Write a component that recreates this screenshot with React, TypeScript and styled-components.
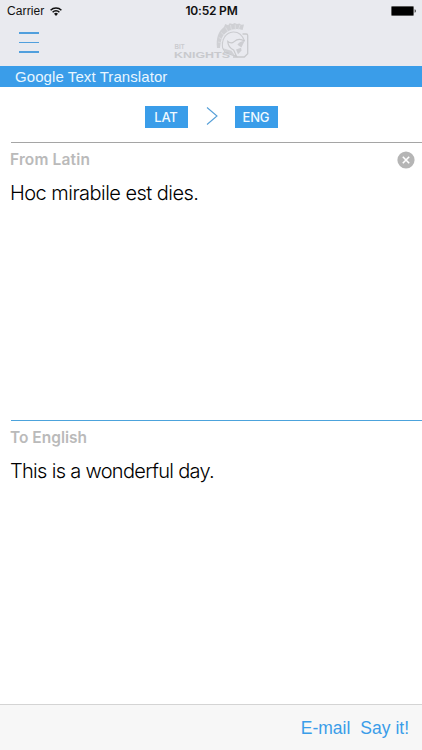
import React from 'react'
import styled, { createGlobalStyle } from 'styled-components';

const BLUE = '#3a9de9';

const GlobalStyle = createGlobalStyle`
  * {
    box-sizing: border-box;
  }
  body {
    margin: 0;
    background-color: #fff;
    font-family: "Liberation Sans", Arial, sans-serif;
  }
`;

const Screen = styled.div`
  display: flex;
  flex-direction: column;
  width: 422px;
  height: 750px;
  overflow: hidden;
  background-color: #fff;
`;

const Header = styled.header`
  height: 66px;
  background-color: #e9eaef;
`;

const StatusBar = styled.div`
  display: grid;
  grid-template-columns: 1fr auto 1fr;
  align-items: center;
  height: 22px;
  padding: 0 6px 0 7px;
  font-size: 12px;
  color: #111;
`;

const Carrier = styled.div`
  display: flex;
  align-items: center;
  gap: 6px;
  letter-spacing: 0.1px;
`;

const Clock = styled.div`
  padding-bottom: 2px;
  font-family: Inter, sans-serif;
  font-weight: 600;
  font-size: 12px;
  letter-spacing: -0.2px;
`;

const BatterySlot = styled.div`
  display: flex;
  justify-content: flex-end;
`;

const NavBar = styled.div`
  display: grid;
  grid-template-columns: 174px 76px;
  height: 44px;
`;

const MenuButton = styled.div`
  display: flex;
  flex-direction: column;
  gap: 8px;
  width: 20px;
  margin: 10px 0 0 19px;
`;

const MenuLine = styled.span`
  height: 1.5px;
  background-color: #509fdd;
`;

const TitleBar = styled.div`
  height: 21px;
  padding-left: 15px;
  background-color: ${BLUE};
  color: #e8f6ff;
  font-size: 15px;
  line-height: 22px;
  letter-spacing: 0.08px;
`;

const LanguageRow = styled.div`
  display: flex;
  justify-content: center;
  align-items: flex-start;
  height: 55px;
  padding-top: 19px;
`;

const LanguageButton = styled.div`
  width: 43px;
  height: 22px;
  background-color: ${BLUE};
  color: #f0f9ff;
  font-family: Inter, sans-serif;
  font-weight: 500;
  font-size: 13px;
  line-height: 23px;
  letter-spacing: -0.2px;
  text-align: center;
`;

const Arrow = styled.svg`
  margin: 0 17px 0 18px;
`;

const Panel = styled.section<{ $height: number; $line: string }>`
  height: ${(p) => p.$height}px;
  margin-left: 11px;
  border-top: 1px solid ${(p) => p.$line};
`;

const PanelHeader = styled.div`
  display: flex;
  justify-content: space-between;
  align-items: center;
  height: 33px;
  padding-right: 7px;
`;

const Label = styled.div<{ $spacing: number }>`
  margin-left: -1px;
  color: #bababa;
  font-family: Inter, sans-serif;
  font-weight: 600;
  font-size: 15.5px;
  letter-spacing: ${(p) => p.$spacing}px;
`;

const Phrase = styled.div<{ $spacing: number }>`
  margin-left: -1px;
  color: #000;
  font-family: Inter, sans-serif;
  font-weight: 300;
  font-size: 20px;
  line-height: 34px;
  letter-spacing: ${(p) => p.$spacing}px;
`;

const Toolbar = styled.footer`
  display: flex;
  justify-content: flex-end;
  gap: 10px;
  height: 46px;
  margin-top: auto;
  padding-right: 13px;
  border-top: 1px solid #d4d4d4;
  background-color: #f7f7f7;
  color: ${BLUE};
  font-size: 17.5px;
  line-height: 46px;
`;

const Action = styled.div`
  white-space: nowrap;
`;

const Wifi = () => (
  <svg width="12" height="9" viewBox="0 0 12 9">
    <g fill="none" stroke="#111" strokeWidth="1.5">
      <path d="M0.6 3.2a7.6 7.6 0 0 1 10.8 0" />
      <path d="M2.6 5.2a4.8 4.8 0 0 1 6.8 0" />
    </g>
    <path d="M6 9L4 6.8a2.9 2.9 0 0 1 4 0z" fill="#111" />
  </svg>
);

const Battery = () => (
  <svg width="25" height="10" viewBox="0 0 25 10">
    <rect x="0" y="0" width="23" height="10" rx="1.2" fill="#777" />
    <rect x="0.8" y="0.8" width="21.4" height="8.4" rx="0.6" fill="#000" />
    <path d="M23.7 3.3c1.4 0.5 1.4 2.9 0 3.4z" fill="#222" />
  </svg>
);

const Logo = () => (
  <svg width="76" height="44" viewBox="0 0 76 44">
    {/* card behind the helmet */}
    <path d="M68.5 12h3.7q1.5 0 1.5 1.5v18.2l-3.4 3.3H59" fill="none" stroke="#c9cacd" strokeWidth="1.3" />
    {/* crest */}
    <path
      d="M43 26C41.8 16 44.6 9 50 5l1.2-3 3 1.3 1.4-2 3 .8 2-1 2.4 1 2.5-.5 1.5 1.2 3-.2-1.4 5.3c-7.8-2.6-16.3.2-20 6.8-1.7 3.2-2 6.5-2.6 11.3z"
      fill="#cfd0d4"
    />
    <path
      d="M44 20l4 1M44.8 15.5l4.5 2.4M47 10.4l4.3 4M51.7 5.5l2.8 5M56.5 3l1 5.4M61.2 2.7l.2 5M66 3l-1.6 4.7"
      stroke="#e0e1e5"
      strokeWidth="0.8"
    />
    {/* dome */}
    <path d="M48.6 26c-1.2-8 2.6-15.4 10.6-16 5.4-.2 9.2 3.2 11.4 9" fill="none" stroke="#cbccd0" strokeWidth="1.1" />
    {/* visor and cheek guard */}
    <path
      d="M70.6 19c-4-2.4-8-1.6-10.4.6-2 1.8-4.6 1.4-6.4-.2 0 3.4 2 6.4 5.8 8.6l3 6.4-11-3.6-3-4.8"
      fill="none"
      stroke="#c8c9cc"
      strokeWidth="1.2"
    />
    <path d="M70.6 19l-3.2 6.4-4-2.6c1.4-2.4 3.8-3.6 7.2-3.8zM62 27.4l5-1.6.6 2.8-3.6 3.6z" fill="#cdced2" />
    <path d="M49.6 26.6l8 2.2 3.4 5-9-3z" fill="#d0d1d5" />
    <text x="0.5" y="26.9" fontFamily="Liberation Sans" fontWeight="bold" fontSize="7.5" fill="#cbccd0" textLength="10" lengthAdjust="spacingAndGlyphs">BIT</text>
    <text x="0" y="36" fontFamily="Liberation Sans" fontWeight="bold" fontSize="8.4" fill="#c8c9cd" textLength="56" lengthAdjust="spacingAndGlyphs">KNIGHTS</text>
  </svg>
);

const ClearIcon = () => (
  <svg width="18" height="18" viewBox="0 0 18 18">
    <circle cx="9" cy="9" r="8.6" fill="#b5b5b5" />
    <path d="M5.8 5.8l6.4 6.4M12.2 5.8l-6.4 6.4" stroke="#fff" strokeWidth="1.6" />
  </svg>
);

const App = () => {
  return (
    <Screen>
      <GlobalStyle />
      <Header>
        <StatusBar>
          <Carrier>
            Carrier
            <Wifi />
          </Carrier>
          <Clock>10:52 PM</Clock>
          <BatterySlot>
            <Battery />
          </BatterySlot>
        </StatusBar>
        <NavBar>
          <MenuButton>
            <MenuLine />
            <MenuLine />
            <MenuLine />
          </MenuButton>
          <Logo />
        </NavBar>
      </Header>
      <TitleBar>Google Text Translator</TitleBar>
      <LanguageRow>
        <LanguageButton>LAT</LanguageButton>
        <Arrow width="12" height="20" viewBox="0 0 12 20">
          <path d="M1 1.5l10 8.5-10 8.5" fill="none" stroke="#559fd8" strokeWidth="1.1" />
        </Arrow>
        <LanguageButton>ENG</LanguageButton>
      </LanguageRow>
      <Panel $height={278} $line="#a5a5a5">
        <PanelHeader>
          <Label $spacing={0.15}>From Latin</Label>
          <ClearIcon />
        </PanelHeader>
        <Phrase $spacing={-0.53}>Hoc mirabile est dies.</Phrase>
      </Panel>
      <Panel $height={284} $line="#4ca3dc">
        <PanelHeader>
          <Label $spacing={0}>To English</Label>
        </PanelHeader>
        <Phrase $spacing={-0.69}>This is a wonderful day.</Phrase>
      </Panel>
      <Toolbar>
        <Action>E-mail</Action>
        <Action>Say it!</Action>
      </Toolbar>
    </Screen>
  )
}

export default App
